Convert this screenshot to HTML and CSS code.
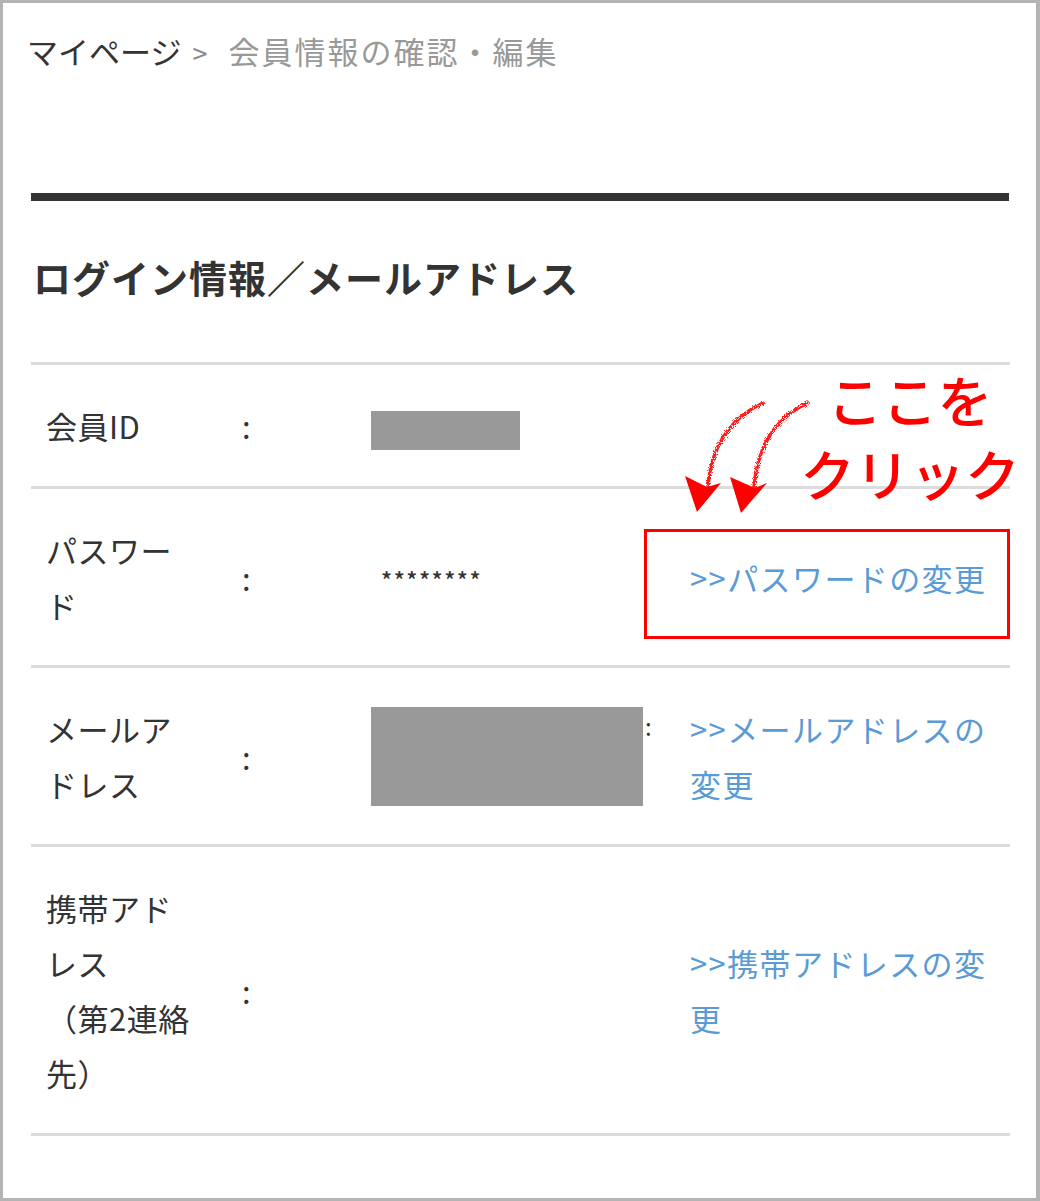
FILE: index.html
```html
<!DOCTYPE html>
<html lang="ja">
<head>
    <meta charset="UTF-8">
    <meta name="viewport" content="width=device-width, initial-scale=1.0">
    <title>会員情報の確認・編集</title>
    <link rel="stylesheet" href="styles.css">
</head>
<body>
    <div class="frame">
        <div class="crumbs">
            <span class="crumb-home">マイページ</span><span class="crumb-sep">&gt;</span><span class="crumb-current">会員情報の確認・編集</span>
        </div>

        <div class="section">
            <div class="section-bar"></div>
            <h2 class="section-title">ログイン情報／メールアドレス</h2>

            <table class="info">
                <colgroup>
                    <col class="col-label">
                    <col class="col-colon">
                    <col class="col-value">
                    <col class="col-link">
                </colgroup>
                <tr>
                    <td class="label">会員ID</td>
                    <td class="colon">:</td>
                    <td class="value"><span class="mask mask-id"></span></td>
                    <td class="link"></td>
                </tr>
                <tr>
                    <td class="label">パスワード</td>
                    <td class="colon">:</td>
                    <td class="value"><span class="stars">********</span></td>
                    <td class="link"><a href="#">&gt;&gt;パスワードの変更</a></td>
                </tr>
                <tr>
                    <td class="label">メールアドレス</td>
                    <td class="colon">:</td>
                    <td class="value"><span class="mask-wrap"><span class="mask mask-mail"></span><span class="peek">:</span></span></td>
                    <td class="link"><a href="#">&gt;&gt;メールアドレスの変更</a></td>
                </tr>
                <tr>
                    <td class="label">携帯アドレス<br>（第2連絡先）</td>
                    <td class="colon">:</td>
                    <td class="value"></td>
                    <td class="link"><a href="#">&gt;&gt;携帯アドレスの変更</a></td>
                </tr>
            </table>
        </div>

        <!-- annotation overlay -->
        <div class="callout-box"></div>
        <div class="callout-text">ここを<br>クリック</div>
        <svg class="callout-arrows" viewBox="0 0 1040 1201" width="1040" height="1201">
            <defs>
                <filter id="rough" x="-20%" y="-20%" width="140%" height="140%">
                    <feTurbulence type="fractalNoise" baseFrequency="1.1" numOctaves="2" seed="3" result="noise"/>
                    <feDisplacementMap in="SourceGraphic" in2="noise" scale="5"/>
                </filter>
            </defs>
            <g filter="url(#rough)" fill="none" stroke="#ff1a1a" stroke-width="3.5" stroke-linecap="round">
                <path d="M763 403 C736 415 712 440 708 486"/>
                <path d="M808 403 C781 415 758 440 754 487"/>
            </g>
            <g fill="#ff0000">
                <polygon points="685,476 707,487 721,483 697,512"/>
                <polygon points="730,477 755,488 767,483 741,513"/>
            </g>
        </svg>
    </div>
</body>
</html>
```

FILE: styles.css
```css
* { margin: 0; padding: 0; box-sizing: border-box; }
body {
    font-family: "Noto Sans CJK JP", "Liberation Sans", sans-serif;
    background: #fff;
    color: #333;
}
.frame {
    position: relative;
    width: 1040px;
    height: 1201px;
    border: 3px solid #b4b4b4;
    border-right-width: 4px;
    background: #fff;
    overflow: hidden;
}

/* breadcrumb */
.crumbs {
    padding: 25px 0 0 24px;
    font-size: 31px;
    line-height: 46px;
    white-space: nowrap;
}
.crumb-home { color: #333; }
.crumb-sep { color: #8a8a8a; font-size: 27px; margin: 0 21px 0 11px; }
.crumb-current { color: #999; letter-spacing: 2px; }

/* section */
.section { padding: 0 27px 0 28px; }
.section-bar { height: 8px; background: #333; margin-top: 117px; }
.section-title {
    margin-top: 48px;
    padding-left: 2px;
    font-size: 38px;
    line-height: 56px;
    font-weight: 700;
    letter-spacing: 1px;
    color: #333;
}

.info {
    width: 979px;
    margin-top: 57px;
    border-collapse: collapse;
    table-layout: fixed;
}
.col-label { width: 183px; }
.col-colon { width: 153px; }
.col-value { width: 309px; }
.col-link { width: 334px; }
.info tr:first-child td { border-top: 3px solid #dcdcdc; }
.info td {
    border-bottom: 3px solid #dcdcdc;
    padding: 33px 0;
    vertical-align: middle;
    font-size: 31px;
    line-height: 55px;
}
.label { padding-left: 15px !important; padding-right: 20px !important; letter-spacing: 0.5px; color: #333; }
.colon { padding-left: 28px !important; color: #333; }
.value { padding-left: 4px !important; }
.link { padding-left: 14px !important; }
.link a { color: #5b9bd5; text-decoration: none; letter-spacing: 1.4px; }

.mask { display: inline-block; background: #999; vertical-align: middle; }
.mask-id { width: 149px; height: 39px; }
.mask-mail { width: 272px; height: 99px; }
.mask-wrap { position: relative; display: inline-block; vertical-align: middle; line-height: 0; }
.peek {
    position: absolute;
    left: 274px;
    top: 4px;
    font-size: 24px;
    line-height: 30px;
    color: #333;
}
.stars {
    padding-left: 10px;
    font-size: 23px;
    letter-spacing: 1.5px;
    font-weight: 500;
    color: #333;
}

/* annotation */
.callout-box {
    position: absolute;
    left: 641px;
    top: 526px;
    width: 366px;
    height: 110px;
    border: 3px solid #ff0000;
}
.callout-text {
    position: absolute;
    left: 797px;
    top: 358px;
    width: 220px;
    text-align: center;
    color: #ff0000;
    font-size: 55px;
    line-height: 74px;
    font-weight: 500;
}
.callout-arrows {
    position: absolute;
    left: -3px;
    top: -3px;
    pointer-events: none;
}
```
